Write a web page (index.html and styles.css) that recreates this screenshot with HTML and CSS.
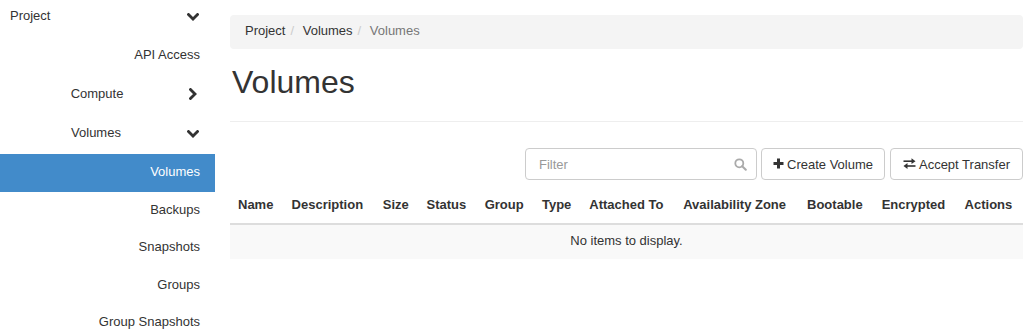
FILE: index.html
```html
<!DOCTYPE html>
<html lang="en">
<head>
<meta charset="utf-8">
<title>Volumes</title>
<link rel="stylesheet" href="styles.css">
</head>
<body>
<div class="layout">
  <nav class="sidebar">
    <div class="nav-dash">
      <span class="nav-dash-label">Project</span>
      <svg class="chev-down" width="12" height="8" viewBox="0 0 12 8"><polyline points="1.5,1.5 6,6 10.5,1.5" fill="none" stroke="#333" stroke-width="2.8" stroke-linecap="square"/></svg>
    </div>
    <a class="nav-panel" href="#">API Access</a>
    <div class="nav-group">
      <span class="nav-group-label">Compute</span>
      <svg class="chev-right" width="8" height="12" viewBox="0 0 8 12"><polyline points="1.5,1.5 6,6 1.5,10.5" fill="none" stroke="#333" stroke-width="2.8" stroke-linecap="square"/></svg>
    </div>
    <div class="nav-group">
      <span class="nav-group-label">Volumes</span>
      <svg class="chev-down" width="12" height="8" viewBox="0 0 12 8"><polyline points="1.5,1.5 6,6 10.5,1.5" fill="none" stroke="#333" stroke-width="2.8" stroke-linecap="square"/></svg>
    </div>
    <ul class="nav-sub">
      <li><a class="nav-item active" href="#">Volumes</a></li>
      <li><a class="nav-item" href="#">Backups</a></li>
      <li><a class="nav-item" href="#">Snapshots</a></li>
      <li><a class="nav-item" href="#">Groups</a></li>
      <li><a class="nav-item" href="#">Group Snapshots</a></li>
    </ul>
  </nav>

  <main class="content">
    <ol class="breadcrumb">
      <li><a href="#">Project</a></li>
      <li><a href="#">Volumes</a></li>
      <li class="current">Volumes</li>
    </ol>

    <div class="page-header">
      <h1>Volumes</h1>
    </div>

    <div class="toolbar">
      <div class="filter">
        <input type="text" placeholder="Filter">
        <svg class="search-icon" width="13" height="13" viewBox="0 0 13 13"><circle cx="5.3" cy="5.3" r="4" fill="none" stroke="#aaa" stroke-width="1.8"/><line x1="8.2" y1="8.2" x2="11.8" y2="11.8" stroke="#aaa" stroke-width="2" stroke-linecap="round"/></svg>
      </div>
      <button class="btn btn-create" type="button">
        <svg width="11" height="11" viewBox="0 0 11 11"><rect x="4" y="0.5" width="3" height="10" fill="#333"/><rect x="0.5" y="4" width="10" height="3" fill="#333"/></svg>
        Create Volume
      </button>
      <button class="btn btn-accept" type="button">
        <svg width="13" height="11" viewBox="0 0 13 11"><path d="M0.5 3.2H9.5" stroke="#333" stroke-width="1.6"/><path d="M8.5 0.3L12.5 3.2L8.5 6.1Z" fill="#333"/><path d="M3.5 8H12.5" stroke="#333" stroke-width="1.6"/><path d="M4.5 5.1L0.5 8L4.5 10.9Z" fill="#333"/></svg>
        Accept Transfer
      </button>
    </div>

    <table class="table">
      <thead>
        <tr>
          <th>Name</th>
          <th>Description</th>
          <th>Size</th>
          <th>Status</th>
          <th>Group</th>
          <th>Type</th>
          <th>Attached To</th>
          <th>Availability Zone</th>
          <th>Bootable</th>
          <th>Encrypted</th>
          <th>Actions</th>
        </tr>
      </thead>
      <tbody>
        <tr class="empty">
          <td colspan="11">No items to display.</td>
        </tr>
      </tbody>
    </table>
  </main>
</div>
</body>
</html>
```

FILE: styles.css
```css
* { box-sizing: border-box; }

html, body {
  margin: 0;
  padding: 0;
  background: #fff;
  overflow: hidden;
}

body {
  font-family: "Liberation Sans", Arial, Helvetica, sans-serif;
  font-size: 13px;
  line-height: 20px;
  color: #333;
}

a { color: #333; text-decoration: none; }

.layout {
  display: flex;
  align-items: flex-start;
}

/* ---------- sidebar ---------- */
.sidebar {
  width: 215px;
  flex: 0 0 215px;
  margin-top: -3px;
}

.nav-dash {
  display: flex;
  align-items: center;
  height: 38px;
  padding: 0 16px 0 10px;
}
.nav-dash-label { flex: 1; }

.nav-panel {
  display: block;
  height: 39px;
  line-height: 39px;
  text-align: right;
  padding-right: 15px;
}

.nav-group {
  display: flex;
  align-items: center;
  height: 39px;
  padding: 0 16px 0 5px;
}
.nav-group-label {
  flex: 1;
  text-align: center;
}
.chev-down { display: block; margin-top: 2px; }
.chev-right { display: block; margin-right: 2px; margin-top: 1px; }

.nav-sub {
  list-style: none;
  margin: 2px 0 0;
  padding: 0;
}
.nav-item {
  display: block;
  height: 37.5px;
  line-height: 36px;
  text-align: right;
  padding-right: 15px;
}
.nav-item.active {
  background: #428bca;
  color: #fff;
}

/* ---------- content ---------- */
.content {
  flex: 1;
  min-width: 0;
  padding: 15px 8px 0 15px;
}

.breadcrumb {
  display: flex;
  list-style: none;
  margin: 0;
  padding: 6px 15px 8px;
  height: 34px;
  background: #f4f4f4;
  border-radius: 4px;
}
.breadcrumb li + li::before {
  content: "/\00a0";
  padding: 0 5px;
  color: #ccc;
}
.breadcrumb .current { color: #777; }

.page-header {
  margin-top: 15px;
  padding-bottom: 21px;
  border-bottom: 1px solid #eee;
}
.page-header h1 {
  margin: 0 0 0 2px;
  font-size: 32px;
  line-height: 36px;
  font-weight: 400;
  color: #333;
}

.toolbar {
  display: flex;
  justify-content: flex-end;
  margin-top: 26px;
  margin-bottom: 8px;
}

.filter {
  position: relative;
  width: 232px;
  height: 32px;
  margin-right: 4px;
}
.filter input {
  width: 100%;
  height: 32px;
  border: 1px solid #ccc;
  border-radius: 4px;
  padding: 0 30px 0 13px;
  font-family: inherit;
  font-size: 13px;
  color: #333;
  outline: none;
}
.filter input::placeholder { color: #999; }
.search-icon {
  position: absolute;
  right: 10px;
  top: 10px;
}

.btn {
  display: flex;
  align-items: center;
  justify-content: center;
  gap: 3px;
  height: 32px;
  padding: 0;
  border: 1px solid #ccc;
  border-radius: 4px;
  background: #fff;
  color: #333;
  font-family: inherit;
  font-size: 13px;
}
.btn-create { width: 124px; }
.btn-accept { width: 133px; margin-left: 5px; }
.btn svg { display: block; margin-top: -1px; }

.table {
  width: 100%;
  border-collapse: collapse;
  border-spacing: 0;
}
.table th {
  text-align: left;
  font-weight: 700;
  padding: 7px 8px 9px;
  line-height: 19px;
  white-space: nowrap;
  border-bottom: 2px solid #ddd;
}
.table td {
  padding: 7px 8px 9px;
  line-height: 18px;
}
.table .empty td {
  text-align: center;
  background: #f9f9f9;
}
```
